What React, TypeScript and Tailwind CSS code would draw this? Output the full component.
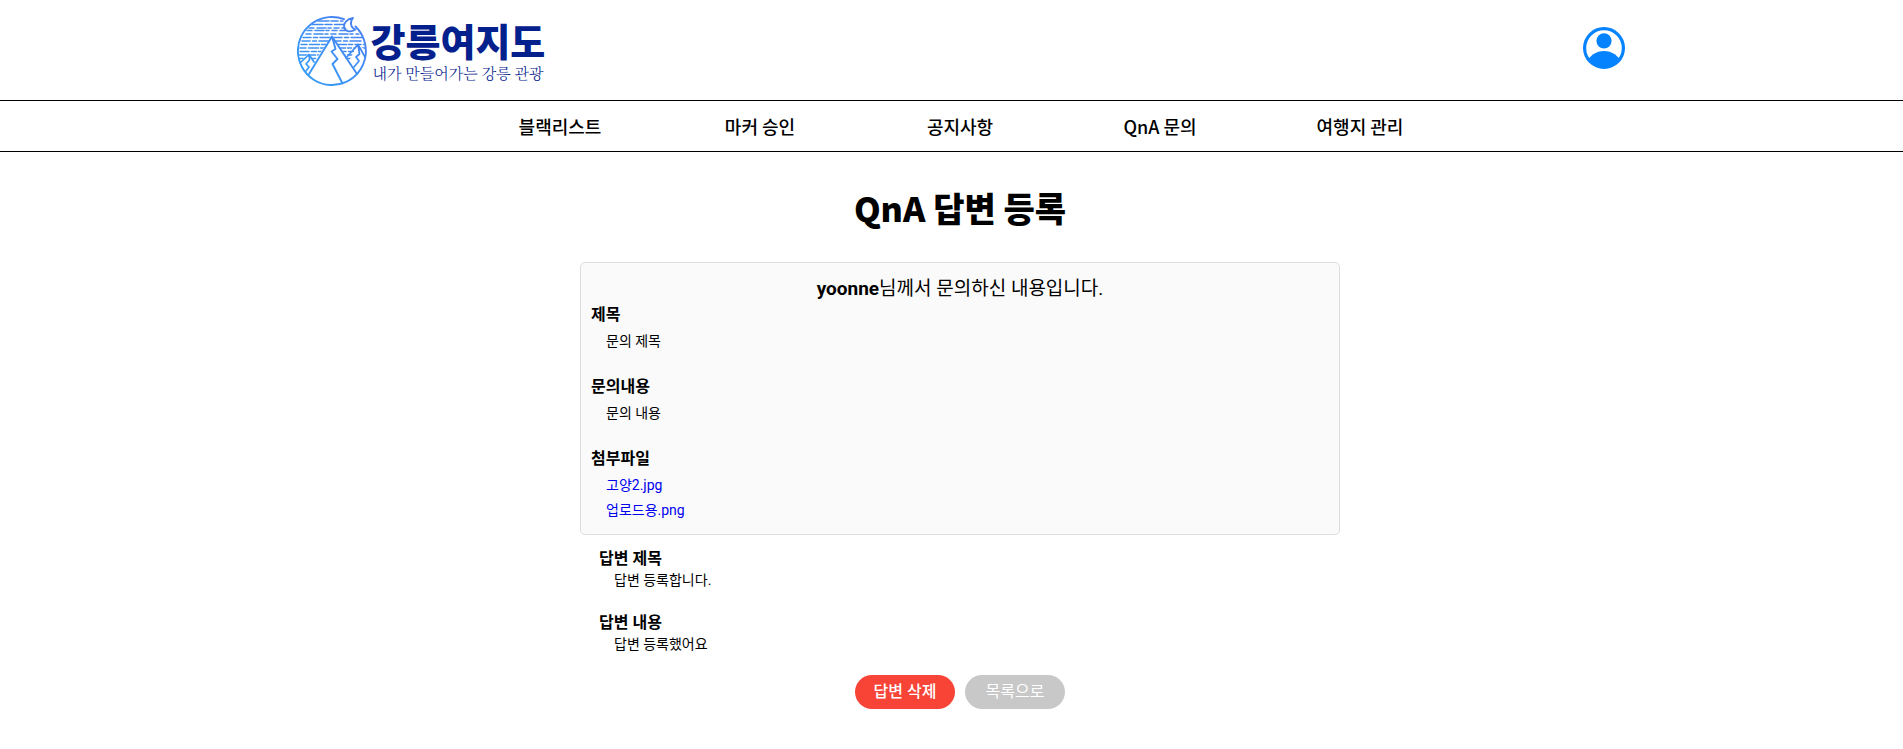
import React from "react";

const menu = ["블랙리스트", "마커 승인", "공지사항", "QnA 문의", "여행지 관리"];
const files = ["고양2.jpg", "업로드용.png"];

function LogoMark() {
  return (
    <svg viewBox="0 0 70 70" className="size-[70px] shrink-0" fill="none" strokeLinejoin="round" strokeLinecap="round" aria-hidden="true">
      <defs>
        <linearGradient id="sky" x1="0" y1="70" x2="70" y2="0" gradientUnits="userSpaceOnUse">
          <stop offset="0" stopColor="#33a0f8" />
          <stop offset="1" stopColor="#4a7df0" />
        </linearGradient>
        <clipPath id="air">
          <path d="M0 0H47V9L51 15L58 16L70 20V34L60 30L52 45L35 20L17 46L11 38L3 46H0Z" />
        </clipPath>
      </defs>
      <g stroke="url(#sky)">
        <g clipPath="url(#air)" strokeWidth="1.5">
          <path strokeDasharray="11 2 7 2.5 15 2" d="M21 5H46M15 8.500H47" />
          <path strokeDasharray="5 3 9 2 3 3" d="M12 12H50M10 14.500H50M9 18H62" />
          <path strokeDasharray="8 2.500 4 2.500 11 3" d="M6 21.500H65M5 25H66" />
          <path strokeDasharray="6 2.500 10 2 4 2.500" d="M4 28.500H67M3 32H68" />
          <path strokeDasharray="9 2.500 5 2" d="M3 35.500H68M2 39H68M2 42.500H68" />
        </g>
        <path strokeWidth="1.900" d="M47 3.200A34 34 0 1 0 58.500 10.500" />
        <path strokeWidth="1.800" d="M56 2C50 3 46.500 7 47 11C47.500 15 53 17 58.500 13.500C53.500 12 52.500 6 56 2Z" />
        <path strokeWidth="1.900" d="M12 58L35 20.500L60 58M35 20.500L38.500 33L34.500 35.500L40.500 43L35.500 48L45.500 67.500" />
        <path strokeWidth="1.700" d="M49 42L61 28.500L68 41M61 28.500L62.500 38L59 41L62 45L57 51M3 47L12 38.500L17 46M12 38.500L12.500 44L9 48L12 51L9 55" />
      </g>
    </svg>
  );
}

function ProfileIcon() {
  return (
    <svg viewBox="0 0 42 42" className="size-[42px]" aria-hidden="true">
      <circle cx="21" cy="21" r="19.400" fill="none" stroke="#0583ff" strokeWidth="3.200" />
      <circle cx="21" cy="13.800" r="7.600" fill="#0583ff" />
      <path d="M5.500 32C9 27 14.500 24 21 24S33 27 36.500 32C33 38 27.500 41 21 41S9 38 5.500 32Z" fill="#0583ff" />
    </svg>
  );
}

function Entry({ title, children }: { title: string; children: React.ReactNode }) {
  return (
    <section>
      <h2 className="text-base leading-[26px] font-bold">{title}</h2>
      <div className="mt-px pl-[15px] text-sm leading-[25px]">{children}</div>
    </section>
  );
}

function Reply({ title, children }: { title: string; children: React.ReactNode }) {
  return (
    <section>
      <h2 className="text-base leading-6 font-bold">{title}</h2>
      <p className="pl-[15px] text-sm leading-[18px]">{children}</p>
    </section>
  );
}

export default function App() {
  return (
    <div className="bg-white font-['Noto_Sans_CJK_KR','Noto_Sans',sans-serif] text-black">
      <header className="pl-[18px]">
        <div className="mx-auto flex h-[100px] max-w-[1328px] items-center justify-between">
          <a href="/" className="flex items-center gap-1 pt-0.5">
            <LogoMark />
            <span className="flex flex-col text-[#03208c]">
              <span className="text-[38px] leading-[44px] font-black">강릉여지도</span>
              <span className="pl-0.5 font-['Noto_Serif_CJK_KR','Noto_Sans_CJK_KR',serif] text-[15px] leading-[22px] font-light">내가 만들어가는 강릉 관광</span>
            </span>
          </a>
          <button type="button" aria-label="내 정보" className="mb-1">
            <ProfileIcon />
          </button>
        </div>
      </header>
      <nav className="border-y border-black pl-[17px]">
        <ul className="mx-auto grid h-[50px] max-w-[1000px] grid-cols-5 items-center text-center text-lg font-medium">
          {menu.map((item) => (
            <li key={item}>
              <a href="#">{item}</a>
            </li>
          ))}
        </ul>
      </nav>
      <main className="pl-[17px]">
        <div className="mx-auto max-w-[760px]">
          <h1 className="pt-8 pb-[30px] text-center text-[34px] leading-12 font-black">QnA 답변 등록</h1>
          <div className="font-[Roboto,'Noto_Sans_CJK_KR',sans-serif]">
            <div className="rounded-[5px] border border-[#ddd] bg-[#fafafa] px-2.5 pt-[13px] pb-[11px]">
              <p className="text-center text-[19px] leading-[26px]">
                <strong className="font-bold">yoonne</strong>님께서 문의하신 내용입니다.
              </p>
              <div className="flex flex-col gap-5">
                <Entry title="제목">문의 제목</Entry>
                <Entry title="문의내용">문의 내용</Entry>
                <Entry title="첨부파일">
                  <ul>
                    {files.map((file) => (
                      <li key={file}>
                        <a href="#" className="text-[#0000ee]">{file}</a>
                      </li>
                    ))}
                  </ul>
                </Entry>
              </div>
            </div>
            <div className="flex flex-col gap-[22px] px-[19px] pt-3">
              <Reply title="답변 제목">답변 등록합니다.</Reply>
              <Reply title="답변 내용">답변 등록했어요</Reply>
            </div>
            <div className="mt-[22px] flex justify-center gap-2.5 text-base text-white">
              <button type="button" className="h-[34px] w-[100px] rounded-full bg-[#f84437] font-medium">답변 삭제</button>
              <button type="button" className="h-[34px] w-[100px] rounded-full bg-[#c8c8c8]">목록으로</button>
            </div>
          </div>
        </div>
      </main>
    </div>
  );
}
